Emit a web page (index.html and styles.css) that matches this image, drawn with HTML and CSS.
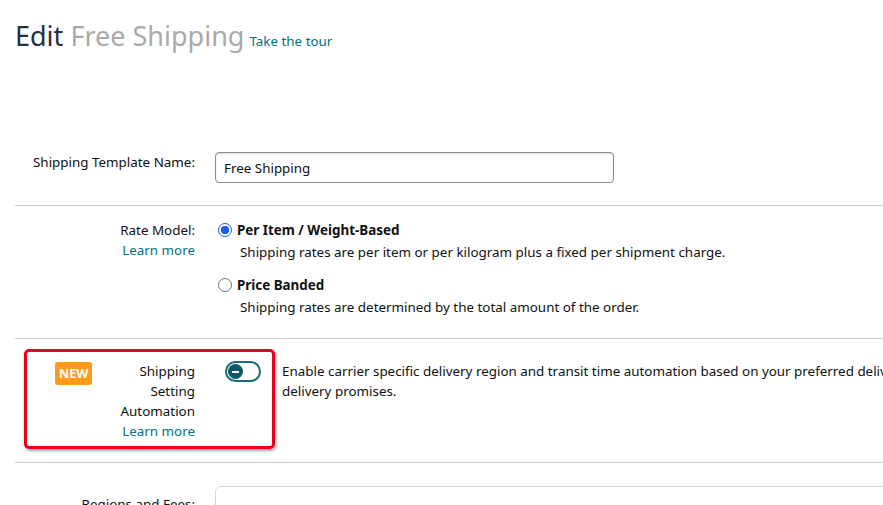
FILE: index.html
```html
<!DOCTYPE html>
<html>
<head>
<meta charset="utf-8">
<link rel="stylesheet" href="styles.css">
</head>
<body>
<div class="page">
  <div class="title-row">
    <h1 class="title"><span class="edit">Edit</span> <span class="name">Free Shipping</span></h1>
    <a class="tour link">Take the tour</a>
  </div>

  <div class="row row-name">
    <div class="label">Shipping Template Name:</div>
    <div class="content">
      <div class="text-input">Free Shipping</div>
    </div>
  </div>

  <div class="row row-rate">
    <div class="label">
      <div>Rate Model:</div>
      <a class="link">Learn more</a>
    </div>
    <div class="content">
      <div class="option">
        <span class="radio checked"></span>
        <span class="opt-title">Per Item / Weight-Based</span>
      </div>
      <div class="opt-desc">Shipping rates are per item or per kilogram plus a fixed per shipment charge.</div>
      <div class="option second">
        <span class="radio"></span>
        <span class="opt-title">Price Banded</span>
      </div>
      <div class="opt-desc">Shipping rates are determined by the total amount of the order.</div>
    </div>
  </div>

  <div class="row row-auto">
    <div class="highlight"></div>
    <div class="label label-auto">
      <span class="badge">NEW</span>
      <div class="auto-text">
        <div>Shipping Setting Automation</div>
        <a class="link">Learn more</a>
      </div>
    </div>
    <div class="content content-auto">
      <span class="toggle"><span class="knob"></span></span>
      <div class="auto-desc"><span class="line-one">Enable carrier specific delivery region and transit time automation based on your preferred delivery speed for accurate</span><br>delivery promises.</div>
    </div>
  </div>

  <div class="row row-regions">
    <div class="label label-regions">Regions and Fees:</div>
    <div class="content">
      <div class="regions-box"></div>
    </div>
  </div>
</div>
</body>
</html>
```

FILE: styles.css
```css
html, body {
  margin: 0;
  padding: 0;
  overflow: hidden;
  background: #ffffff;
}
body {
  font-family: "Noto Sans", "Open Sans", sans-serif;
  font-size: 13.4px;
  line-height: 20px;
  color: #0f1111;
}
.page {
  width: 1100px;
  padding: 16px 0 0 15px;
}
.title-row {
  display: flex;
  align-items: baseline;
  gap: 5px;
  height: 136px;
}
.title {
  margin: 0;
  font-size: 27px;
  line-height: 40px;
  font-weight: 400;
}
.edit { color: #232f3e; }
.name { color: #aaaaaa; }
.link {
  color: #007185;
  text-decoration: none;
}
.tour { font-size: 13.4px; }

.row {
  position: relative;
  display: grid;
  grid-template-columns: 180px 1fr;
  column-gap: 20px;
  border-bottom: 1px solid #cccccc;
}
.label {
  text-align: right;
}
.row-name {
  padding-bottom: 22px;
  align-items: start;
}
.text-input {
  width: 399px;
  height: 31px;
  box-sizing: border-box;
  border: 1px solid #888c8c;
  border-radius: 4px;
  padding: 5px 8px;
  box-shadow: inset 0 1px 2px rgba(15,17,17,0.15);
}
.row-rate {
  padding: 14px 0 21px;
}
.option {
  display: flex;
  align-items: center;
  gap: 5px;
}
.option.second { margin-top: 13px; }
.radio {
  flex: none;
  width: 14px;
  height: 14px;
  border: 1px solid #6f7373;
  border-radius: 50%;
  margin-left: 3px;
  box-sizing: border-box;
  background: #fff;
}
.radio.checked {
  border: 1px solid #1a5fe8;
  background: radial-gradient(circle, #1a5fe8 0 4px, #fff 4.5px);
}
.opt-title { font-weight: 700; }
.opt-desc {
  margin-top: 2px;
  padding-left: 25px;
}

.row-auto {
  padding: 22px 0 21px;
}
.highlight {
  position: absolute;
  left: 9px;
  top: 10px;
  width: 245px;
  height: 94px;
  border: 3px solid #e8001c;
  border-radius: 5px;
  box-shadow: 1px 2px 3px rgba(0,0,0,0.35);
  pointer-events: none;
}
.label-auto {
  display: flex;
  justify-content: space-between;
  align-items: flex-start;
  padding-left: 40px;
}
.badge {
  background: #ff9a1a;
  color: #ffffff;
  font-weight: 700;
  font-size: 12.5px;
  line-height: 23px;
  padding: 0 4px;
  border-radius: 3px;
  margin-top: 1px;
}
.auto-text {
  width: 90px;
}
.content-auto {
  display: flex;
  align-items: flex-start;
  gap: 21px;
}
.toggle {
  flex: none;
  position: relative;
  width: 36px;
  height: 21px;
  box-sizing: border-box;
  border: 2px solid #1d6b78;
  border-radius: 11px;
  margin-left: 10px;
  background: #fff;
}
.knob {
  position: absolute;
  left: 1px;
  top: 1px;
  width: 15px;
  height: 15px;
  border-radius: 50%;
  background: #0f5866;
}
.knob::after {
  content: "";
  position: absolute;
  left: 4px;
  top: 6.5px;
  width: 7px;
  height: 2px;
  background: #fff;
}
.auto-desc {
  width: 800px;
}
.line-one {
  white-space: nowrap;
}
.row-regions {
  border-bottom: none;
  padding-top: 23px;
}
.label-regions {
  padding-top: 8px;
}
.regions-box {
  height: 120px;
  border: 1px solid #d5d9d9;
  border-radius: 6px;
}
```
